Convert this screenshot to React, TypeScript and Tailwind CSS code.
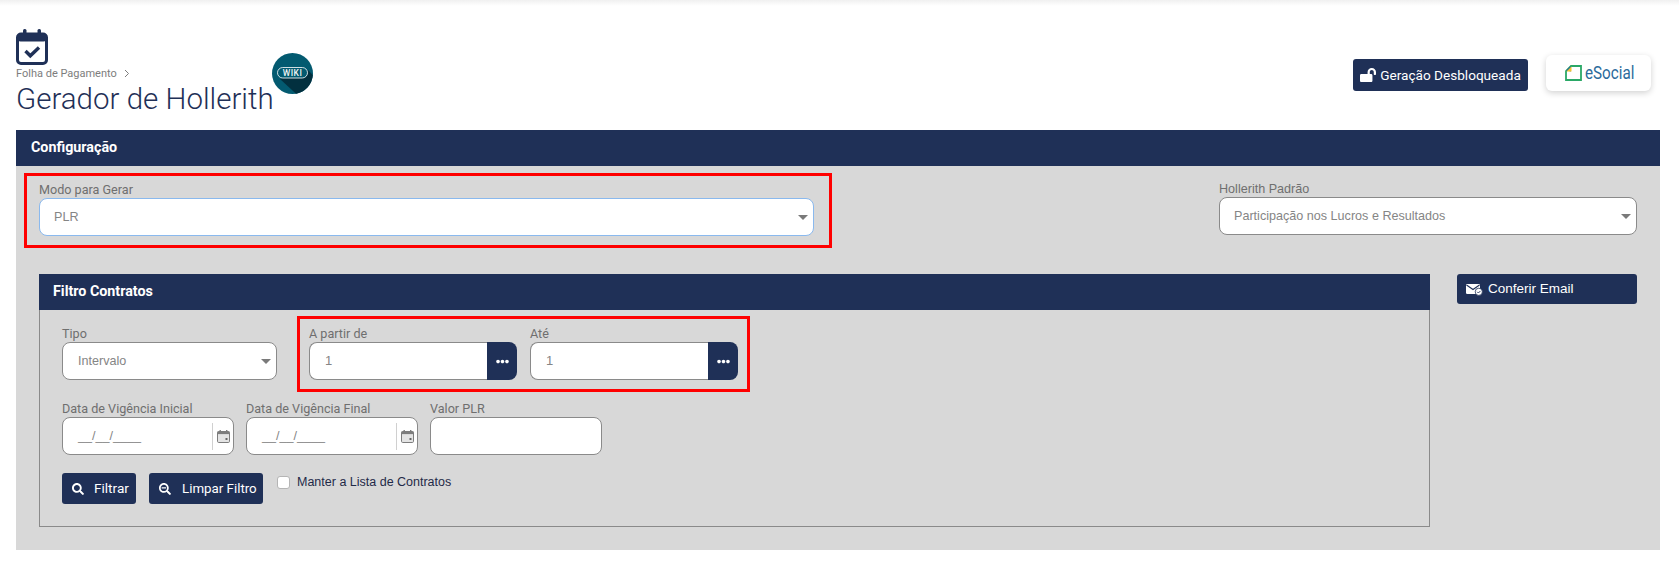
import { FaLockOpen, FaSearch, FaSearchMinus, FaEllipsisH } from "react-icons/fa";

const Arrow = () => (
  <svg width="10" height="5" viewBox="0 0 10 5" className="shrink-0">
    <path d="M0 0h10L5 5z" fill="#7a7a7a" />
  </svg>
);

const CalendarSmall = () => (
  <svg width="13" height="13" viewBox="0 0 13 13" fill="none">
    <rect x="0.5" y="1.5" width="12" height="11" rx="1.2" stroke="#7d7d7d" strokeWidth="1" fill="#e4e4e4" />
    <rect x="0.5" y="1.5" width="12" height="2.6" fill="#7d7d7d" />
    <rect x="2.5" y="0" width="1.4" height="2" fill="#7d7d7d" />
    <rect x="9" y="0" width="1.4" height="2" fill="#7d7d7d" />
    <rect x="8.5" y="8" width="2" height="2" fill="#666" />
  </svg>
);

const Label = ({ text, roboto = true }: { text: string; roboto?: boolean }) => (
  <p
    className={`h-[16px] leading-[16px] text-[12.6px] text-[#6f6f6f] whitespace-nowrap ${
      roboto ? "font-['Roboto',sans-serif]" : "font-['Liberation_Sans',sans-serif]"
    }`}
  >
    {text}
  </p>
);

const Select = ({ value, width, blue, pl = "pl-[14px]" }: { value: string; width: string; blue?: boolean; pl?: string }) => (
  <div
    className={`${width} ${pl} h-[38px] pr-[5px] flex items-center justify-between bg-white rounded-[8px] border ${
      blue ? "border-[#8ab9ee]" : "border-[#8a8a8a]"
    }`}
  >
    <span className="text-[12.6px] text-[#858585] font-['Liberation_Sans',sans-serif]">{value}</span>
    <Arrow />
  </div>
);

const LookupInput = ({ text }: { text: string }) => (
  <div>
    <Label text={text} />
    <div className="w-[208px] h-[38px] flex">
      <div className="w-[178px] pl-[15px] flex items-center bg-white border border-r-0 border-[#8a8a8a] rounded-l-[8px] text-[13px] text-[#858585] font-['Liberation_Sans',sans-serif]">
        1
      </div>
      <div className="w-[30px] bg-[#1f3057] rounded-r-[8px] flex items-center justify-center text-white text-[13px]">
        <FaEllipsisH />
      </div>
    </div>
  </div>
);

const DateInput = ({ text }: { text: string }) => (
  <div className="w-[172px]">
    <Label text={text} />
    <div className="h-[38px] pl-[15px] pr-[3px] flex items-center justify-between bg-white border border-[#8a8a8a] rounded-[8px]">
      <span className="text-[12.6px] leading-[16px] text-[#858585] font-['Liberation_Sans',sans-serif]">__/__/____</span>
      <div className="h-[27px] pl-[4px] border-l border-[#d0d0d0] flex items-center">
        <CalendarSmall />
      </div>
    </div>
  </div>
);

const App = () => {
  return (
    <div className="relative w-[1679px] h-[565px] overflow-hidden bg-white font-['Roboto',sans-serif]">
      <div className="h-[6px] bg-gradient-to-b from-[#f0f0f0] to-white" />

      <header className="h-[124px] pl-[16px] pr-[28px] flex justify-between">
        <div className="pt-[23px]">
          <svg width="32" height="36" viewBox="0 0 32 36" className="block">
            <rect x="7" y="0" width="3.5" height="7" rx="1.5" fill="#1f3057" />
            <rect x="21.5" y="0" width="3.5" height="7" rx="1.5" fill="#1f3057" />
            <rect x="1.5" y="5" width="29" height="29.5" rx="3.5" fill="#fff" stroke="#1f3057" strokeWidth="3" />
            <rect x="1.5" y="5" width="29" height="7.5" rx="3" fill="#1f3057" />
            <path d="M9.5 22l4.8 4.8L23 18.5" fill="none" stroke="#1f3057" strokeWidth="3.4" />
          </svg>
          <div className="mt-[1px] h-[15px] flex items-center gap-[7px] text-[11px] leading-[15px] text-[#7d7d7d]">
            <span>Folha de Pagamento</span>
            <svg width="6" height="9" viewBox="0 0 6 9">
              <path d="M1 1l3.5 3.5L1 8" fill="none" stroke="#7d7d7d" strokeWidth="1" />
            </svg>
          </div>
          <div className="relative">
            <h1 className="text-[29.5px] leading-[36px] font-light text-[#1f3057] whitespace-nowrap">Gerador de Hollerith</h1>
            <svg width="41" height="41" viewBox="0 0 41 41" className="absolute left-[256px] top-[-28px]">
              <circle cx="20.5" cy="20.5" r="20.5" fill="#035a70" />
              <path d="M36 17 L40.8 22 A20.5 20.5 0 0 1 24 40.7 L8 26z" fill="#02303f" />
              <rect x="5.5" y="14.5" width="30" height="10.5" rx="5.25" fill="#035a70" stroke="#e5eef0" strokeWidth="0.9" />
              <text x="20.5" y="23" textAnchor="middle" fontSize="8.5" fontWeight="500" fill="#eef4f5" fontFamily="Roboto, sans-serif" letterSpacing="0.5">
                WIKI
              </text>
            </svg>
          </div>
        </div>
        <div className="pt-[49px] flex items-start gap-[18px]">
          <div className="mt-[4px] w-[175px] h-[32px] flex items-center justify-center gap-[4px] bg-[#1f3057] rounded-[3px] text-white text-[13.6px]">
            <FaLockOpen className="text-[16px]" />
            <span>Geração Desbloqueada</span>
          </div>
          <div className="w-[105px] h-[36px] pl-[19px] flex items-center gap-[3px] bg-white rounded-[6px] shadow-[0_2px_6px_rgba(0,0,0,0.18)]">
            <svg width="17" height="16" viewBox="0 0 17 16" className="shrink-0">
              <path d="M6 1h10v14H1V6z" fill="#fff" stroke="#2aa866" strokeWidth="1.8" />
              <path d="M5.5 1L1 5.5l5 1z" fill="#2b6a9b" />
              <path d="M6.5 1.5v5h-5z" fill="#f4c430" />
            </svg>
            <span className="w-[48px] text-[19px] leading-[20px] text-[#2b6a9b] origin-left scale-x-[0.8] whitespace-nowrap">eSocial</span>
          </div>
        </div>
      </header>

      <section className="ml-[16px] w-[1644px] h-[420px] bg-[#d8d8d8]">
        <div className="h-[36px] pl-[15px] flex items-center bg-[#1f3057] text-white text-[14.3px] font-bold">Configuração</div>

        <div className="pl-[8px] pr-[23px] pt-[7px] flex justify-between">
          <div className="w-[808px] h-[75px] pl-[12px] pt-[6px] border-[3px] border-[#ff0000]">
            <Label text="Modo para Gerar" />
            <Select value="PLR" width="w-[775px]" blue />
          </div>
          <div className="w-[418px] pt-[8px]">
            <Label text="Hollerith Padrão" roboto={false} />
            <Select value="Participação nos Lucros e Resultados" width="w-[418px]" />
          </div>
        </div>

        <div className="mt-[26px] pl-[23px] flex items-start">
          <div className="w-[1391px]">
            <div className="h-[36px] pl-[14px] flex items-center bg-[#1f3057] text-white text-[14.3px] font-bold">Filtro Contratos</div>
            <div className="h-[217px] pl-[22px] border border-t-0 border-[#8a8a8a]">
              <div className="flex items-start">
                <div className="mt-[16px] w-[215px]">
                  <Label text="Tipo" />
                  <Select value="Intervalo" width="w-[215px]" pl="pl-[15px]" />
                </div>
                <div className="ml-[20px] mt-[6px] w-[453px] h-[76px] pl-[9px] pt-[7px] flex gap-[13px] border-[3px] border-[#ff0000]">
                  <LookupInput text="A partir de" />
                  <LookupInput text="Até" />
                </div>
              </div>
              <div className="mt-[9px] flex gap-[12px]">
                <DateInput text="Data de Vigência Inicial" />
                <DateInput text="Data de Vigência Final" />
                <div className="w-[172px]">
                  <Label text="Valor PLR" />
                  <div className="h-[38px] bg-white border border-[#8a8a8a] rounded-[8px]" />
                </div>
              </div>
              <div className="mt-[18px] flex items-start">
                <button className="w-[74px] h-[31px] pl-[10px] flex items-center gap-[10px] bg-[#1f3057] rounded-[3px] text-white text-[13.6px]">
                  <FaSearch className="text-[12px]" />
                  Filtrar
                </button>
                <button className="ml-[13px] w-[114px] h-[31px] pl-[10px] flex items-center gap-[11px] bg-[#1f3057] rounded-[3px] text-white text-[13.3px]">
                  <FaSearchMinus className="text-[12px]" />
                  Limpar Filtro
                </button>
                <div className="ml-[14px] mt-[3px] w-[13px] h-[13px] bg-white border border-[#b5b5b5] rounded-[3px]" />
                <span className="ml-[7px] text-[12.5px] leading-[16px] mt-[1px] text-[#1f2a48] font-['Liberation_Sans',sans-serif]">
                  Manter a Lista de Contratos
                </span>
              </div>
            </div>
          </div>
          <button className="ml-[27px] w-[180px] h-[30px] pl-[9px] flex items-center gap-[5px] bg-[#1f3057] rounded-[3px] text-white text-[13.5px] font-['Liberation_Sans',sans-serif]">
            <svg width="17" height="13" viewBox="0 0 17 13">
              <rect x="0" y="1" width="14" height="10" rx="1.2" fill="#fff" />
              <path d="M0.5 2l6.5 4.5L13.5 2" fill="none" stroke="#1f3057" strokeWidth="1.1" />
              <circle cx="12.8" cy="8.8" r="3.6" fill="#fff" stroke="#1f3057" strokeWidth="0.8" />
              <path d="M11.2 8.8l1.2 1.2 2-2" fill="none" stroke="#1f3057" strokeWidth="0.9" />
            </svg>
            Conferir Email
          </button>
        </div>
      </section>
    </div>
  );
};

export default App;
